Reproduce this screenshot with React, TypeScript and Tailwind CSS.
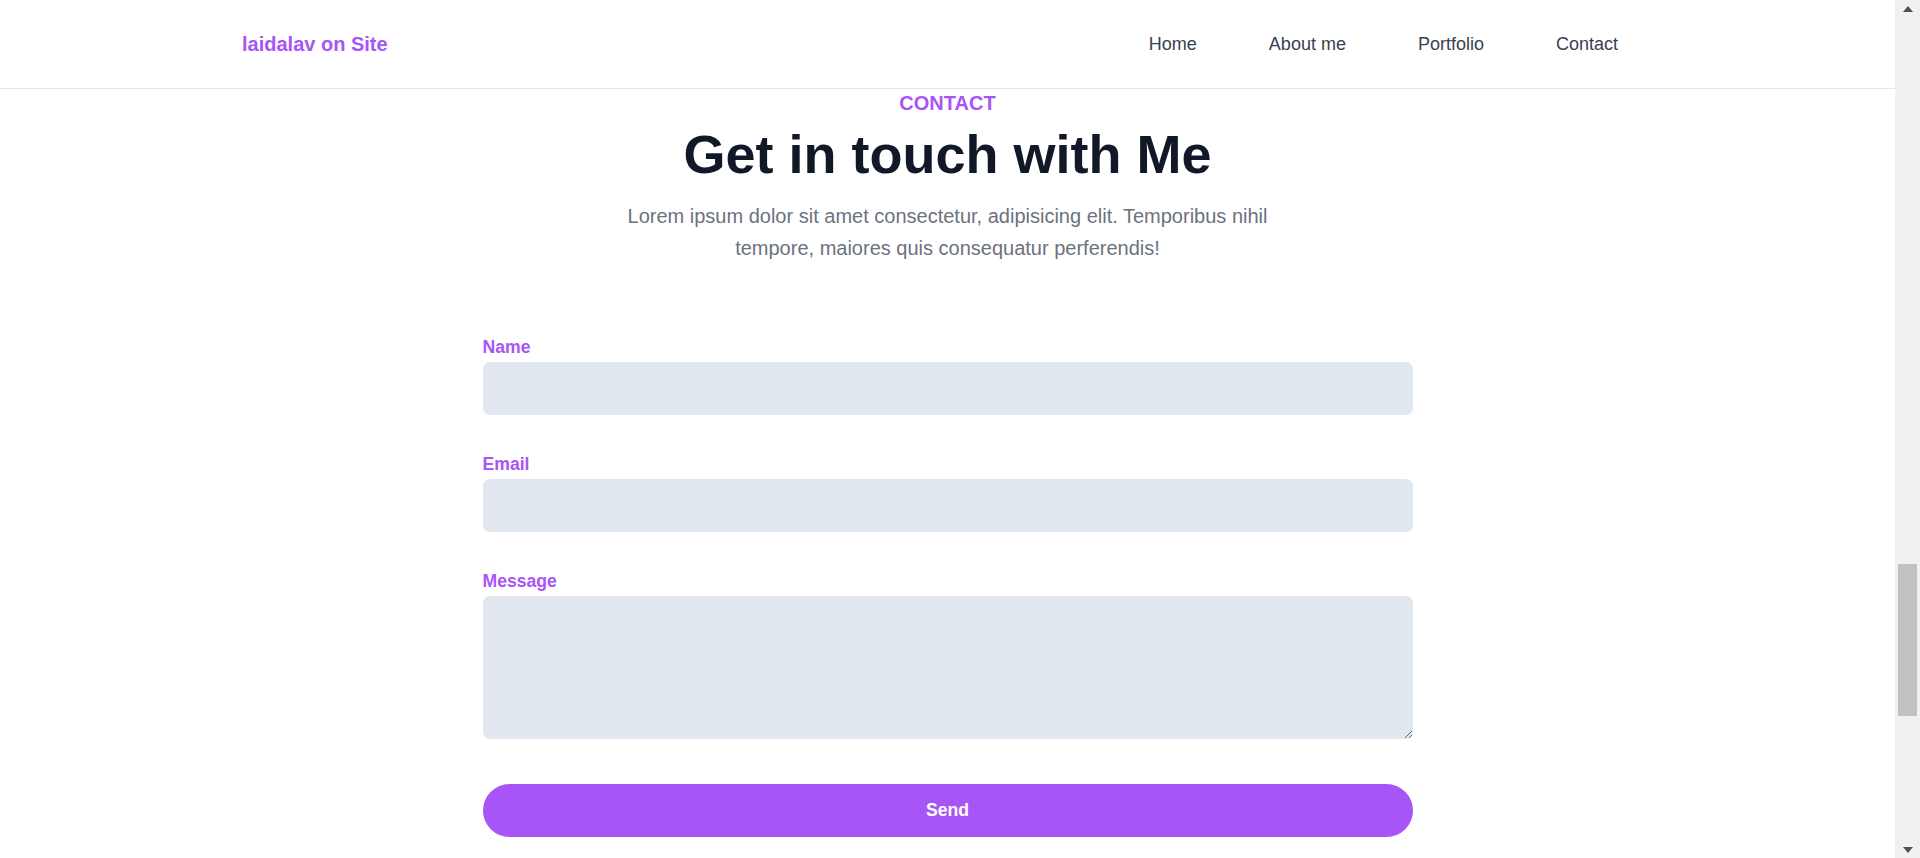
import React from "react";

function Field({ label, children }: { label: string; children: React.ReactNode }) {
  return (
    <div className="flex flex-col">
      <label className="block text-[17.6px] leading-6 font-bold text-[#a855f7] mb-[3px]">{label}</label>
      {children}
    </div>
  );
}

export default function App() {
  return (
    <div
      className="flex h-[858px] w-full overflow-hidden bg-white"
      style={{ fontFamily: '"Liberation Sans", Arial, sans-serif' }}
    >
      <div className="flex flex-1 flex-col min-w-0">
        <header className="flex h-[89px] shrink-0 items-center justify-between border-b border-[#e5e7eb] pl-[242px] pr-[277px]">
          <a className="text-xl font-bold text-[#a855f7]">laidalav on Site</a>
          <nav className="flex items-center gap-[72px] text-lg text-[#374151]">
            <a>Home</a>
            <a>About me</a>
            <a>Portfolio</a>
            <a>Contact</a>
          </nav>
        </header>

        <section className="flex flex-col items-center">
          <p className="text-xl leading-[28px] font-bold text-[#a855f7]">CONTACT</p>
          <h1 className="mt-[10px] text-[54px] leading-none font-bold text-[#111827]">Get in touch with Me</h1>
          <p className="mt-[19px] max-w-[672px] text-center text-xl leading-8 text-[#6b7280]">
            Lorem ipsum dolor sit amet consectetur, adipisicing elit. Temporibus nihil tempore, maiores quis
            consequatur perferendis!
          </p>

          <form className="mt-[71px] flex w-[930px] flex-col gap-[37px]" onSubmit={(e) => e.preventDefault()}>
            <Field label="Name">
              <input type="text" className="block h-[53px] w-full rounded-[7px] bg-[#e2e8f0] px-4 outline-none" />
            </Field>
            <Field label="Email">
              <input type="email" className="block h-[53px] w-full rounded-[7px] bg-[#e2e8f0] px-4 outline-none" />
            </Field>
            <Field label="Message">
              <textarea className="block h-[143px] w-full rounded-[7px] bg-[#e2e8f0] p-4 outline-none" />
            </Field>
            <button
              type="submit"
              className="mt-[8px] h-[53px] w-full rounded-full bg-[#a855f7] text-[17.6px] font-bold text-white"
            >
              Send
            </button>
          </form>
        </section>
      </div>

      <div className="flex w-[25px] shrink-0 flex-col bg-[#f1f1f1]">
        <div className="flex h-[17px] items-center justify-center">
          <svg width="10" height="6" viewBox="0 0 10 6">
            <polygon points="5,0 10,6 0,6" fill="#505050" />
          </svg>
        </div>
        <div className="h-[547px]" />
        <div className="mx-[3px] h-[152px] bg-[#c1c1c1]" />
        <div className="flex-1" />
        <div className="flex h-[17px] items-center justify-center">
          <svg width="10" height="6" viewBox="0 0 10 6">
            <polygon points="0,0 10,0 5,6" fill="#505050" />
          </svg>
        </div>
      </div>
    </div>
  );
}
